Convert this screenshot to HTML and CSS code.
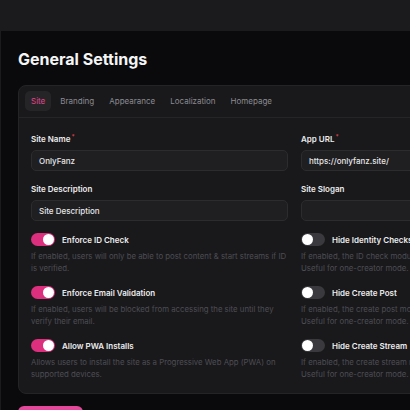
FILE: index.html
```html
<!DOCTYPE html>
<html lang="en">
<head>
<meta charset="utf-8">
<title>General Settings</title>
<link rel="stylesheet" href="styles.css">
</head>
<body>
  <header class="topbar"></header>
  <main class="main">
    <h1 class="page-title">General Settings</h1>

    <section class="card">
      <nav class="tabs">
        <span class="tab tab-active">Site</span>
        <span class="tab">Branding</span>
        <span class="tab">Appearance</span>
        <span class="tab">Localization</span>
        <span class="tab">Homepage</span>
      </nav>

      <div class="card-body">
        <div class="field">
          <label class="field-label">Site Name<span class="req">*</span></label>
          <div class="input">OnlyFanz</div>
        </div>
        <div class="field">
          <label class="field-label">App URL<span class="req">*</span></label>
          <div class="input">https://onlyfanz.site/</div>
        </div>

        <div class="field">
          <label class="field-label">Site Description</label>
          <div class="input">Site Description</div>
        </div>
        <div class="field">
          <label class="field-label">Site Slogan</label>
          <div class="input"></div>
        </div>

        <div class="switch-item">
          <div class="switch-head">
            <span class="switch on"><span class="knob"></span></span>
            <span class="switch-label">Enforce ID Check</span>
          </div>
          <p class="switch-desc">If enabled, users will only be able to post content &amp; start streams if ID is verified.</p>
        </div>
        <div class="switch-item">
          <div class="switch-head">
            <span class="switch"><span class="knob"></span></span>
            <span class="switch-label">Hide Identity Checks</span>
          </div>
          <p class="switch-desc">If enabled, the ID check module will be hidden from the menus. Useful for one-creator mode.</p>
        </div>

        <div class="switch-item">
          <div class="switch-head">
            <span class="switch on"><span class="knob"></span></span>
            <span class="switch-label">Enforce Email Validation</span>
          </div>
          <p class="switch-desc">If enabled, users will be blocked from accessing the site until they verify their email.</p>
        </div>
        <div class="switch-item">
          <div class="switch-head">
            <span class="switch"><span class="knob"></span></span>
            <span class="switch-label">Hide Create Post</span>
          </div>
          <p class="switch-desc">If enabled, the create post module will be hidden from the menus. Useful for one-creator mode.</p>
        </div>

        <div class="switch-item">
          <div class="switch-head">
            <span class="switch on"><span class="knob"></span></span>
            <span class="switch-label">Allow PWA Installs</span>
          </div>
          <p class="switch-desc">Allows users to install the site as a Progressive Web App (PWA) on supported devices.</p>
        </div>
        <div class="switch-item">
          <div class="switch-head">
            <span class="switch"><span class="knob"></span></span>
            <span class="switch-label">Hide Create Stream</span>
          </div>
          <p class="switch-desc">If enabled, the create stream module will be hidden from the menus. Useful for one-creator mode.</p>
        </div>
      </div>
    </section>

    <button class="btn-save" type="button">Save Changes</button>
  </main>
</body>
</html>
```

FILE: styles.css
```css
html, body {
  margin: 0;
  padding: 0;
  overflow: hidden;
}

body {
  background: #0a0a0c;
  font-family: Inter, "Noto Sans", sans-serif;
  color: #e8e8ea;
  font-size: 8px;
  line-height: 12px;
}

.topbar {
  height: 31px;
  background: #1b1b1d;
}

.main {
  padding: 16px 0 0 18px;
  border-left: 1px solid #1b1b1d;
}

.page-title {
  margin: 0 0 14px -1px;
  font-size: 16px;
  line-height: 24px;
  font-weight: 700;
  color: #f5f5f6;
}

.card {
  width: 551px;
  margin-left: -1px;
  background: #19191b;
  border: 1px solid #242427;
  border-radius: 8px;
}

.tabs {
  display: flex;
  gap: 3px;
  padding: 5px 6px 6px;
  border-bottom: 1px solid #252528;
}

.tab {
  display: flex;
  align-items: center;
  height: 20px;
  padding: 0 6px;
  border-radius: 5px;
  color: #8b8b91;
  font-weight: 400;
}

.tab-active {
  background: #252527;
  color: #e0468f;
}

.card-body {
  display: grid;
  grid-template-columns: 257px 257px;
  column-gap: 13px;
  row-gap: 12px;
  padding: 13px 12px 13px;
}

.field {
  display: flex;
  flex-direction: column;
  gap: 5px;
}

.field-label {
  font-weight: 600;
  color: #ececee;
}

.req {
  color: #e5484d;
  font-size: 6px;
  vertical-align: 3px;
  margin-left: 1px;
}

.input {
  box-sizing: border-box;
  height: 21px;
  padding: 0 7px;
  display: flex;
  align-items: center;
  background: #1f1f21;
  border: 1px solid #2c2c2f;
  border-radius: 5px;
  color: #e6e6e8;
  font-weight: 500;
}

.switch-item {
  display: flex;
  flex-direction: column;
  gap: 4px;
}

.switch-head {
  display: flex;
  align-items: center;
  gap: 7px;
  height: 13px;
}

.switch {
  box-sizing: border-box;
  width: 24px;
  height: 13px;
  border-radius: 7px;
  background: #3a3a3e;
  padding: 1px;
  display: flex;
  justify-content: flex-start;
}

.switch.on {
  background: #dc2f7d;
  justify-content: flex-end;
}

.knob {
  width: 11px;
  height: 11px;
  border-radius: 50%;
  background: #ffffff;
}

.switch-label {
  font-weight: 600;
  color: #ececee;
}

.switch-desc {
  margin: 0;
  color: #4d4d54;
  font-size: 7.8px;
  line-height: 12px;
}

.btn-save {
  margin: 12px 0 0 -1px;
  width: 65px;
  height: 34px;
  border: 0;
  border-radius: 6px;
  background: #e3489a;
  color: #ffffff;
  font-family: Inter, "Noto Sans", sans-serif;
  font-size: 8px;
  font-weight: 600;
}
```
